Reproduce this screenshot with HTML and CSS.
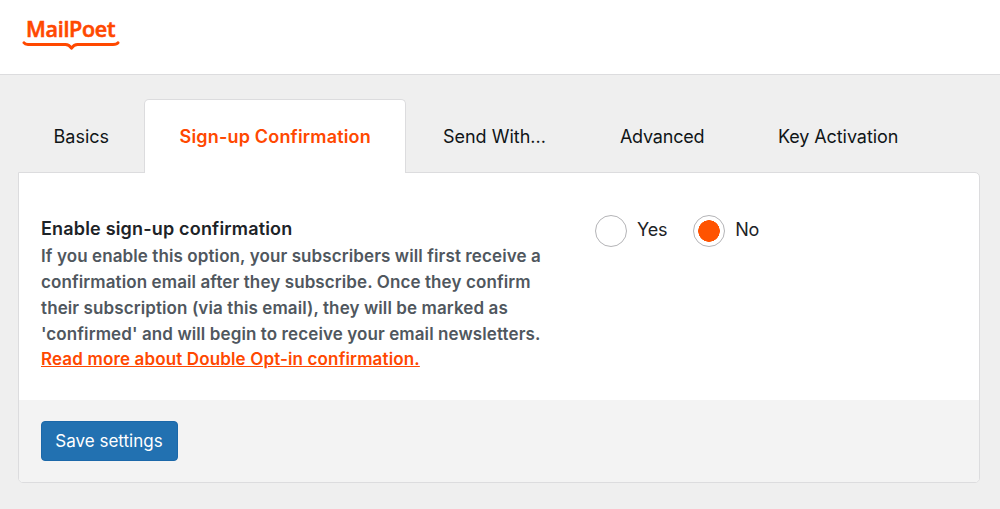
FILE: index.html
```html
<!DOCTYPE html>
<html lang="en">
	<head>
		<meta charset="utf-8">
		<title>MailPoet - Settings</title>
		<link rel="stylesheet" href="styles.css">
	</head>
	<body>
		<header class="top-bar">
			<a class="logo">
				<span class="logo-name">MailPoet</span>
				<svg class="logo-line" width="98" height="10" viewBox="0 0 98 10">
					<path d="M2 1.800Q3 3.500 6 3.500H43.500Q47 3.500 49.500 7.300Q52 3.500 55.500 3.500H91Q95 3.500 96 1.800" fill="none" stroke="#ff4800" stroke-width="2.900" stroke-linecap="round" stroke-linejoin="round"/>
				</svg>
			</a>
		</header>

		<main class="settings">
			<nav class="tabs">
				<a class="tab">Basics</a>
				<a class="tab active">Sign-up Confirmation</a>
				<a class="tab">Send With...</a>
				<a class="tab narrow">Advanced</a>
				<a class="tab">Key Activation</a>
			</nav>

			<form class="panel">
				<div class="row">
					<div class="description">
						<h4>Enable sign-up confirmation</h4>
						<p>
							If you enable this option, your subscribers will first receive a<br>
							confirmation email after they subscribe. Once they confirm<br>
							their subscription (via this email), they will be marked as<br>
							'confirmed' and will begin to receive your email newsletters.<br>
							<a class="more">Read more about Double Opt-in confirmation.</a>
						</p>
					</div>
					<div class="choices">
						<label class="choice">
							<input type="radio" name="confirmation">
							<span>Yes</span>
						</label>
						<label class="choice">
							<input type="radio" name="confirmation" checked>
							<span>No</span>
						</label>
					</div>
				</div>
				<div class="save">
					<button type="button" class="button">Save settings</button>
				</div>
			</form>
		</main>
	</body>
</html>
```

FILE: styles.css
```css
* {
	box-sizing: border-box;
}

body {
	margin: 0;
	height: 509px;
	overflow: hidden;
	background: #efefef;
	color: #1d2327;
	font-family: Inter, "Liberation Sans", sans-serif;
	font-size: 18px;
}

.top-bar {
	height: 75px;
	padding: 16px 0 0 22px;
	background: #fff;
	border-bottom: 1px solid #dcdcde;
}

.logo {
	display: block;
	width: 98px;
	color: #ff4800;
}

.logo-name {
	display: block;
	height: 25px;
	padding-left: 4px;
	font-family: "Open Sans", sans-serif;
	font-size: 21.5px;
	font-weight: 600;
	letter-spacing: -0.3px;
	line-height: 26px;
	-webkit-text-stroke: 0.6px #ff4800;
}

.logo-line {
	display: block;
}

.settings {
	padding: 24px 20px 0 18px;
}

.tabs {
	display: flex;
	height: 74px;
	margin-bottom: -1px;
	position: relative;
}

.tab {
	padding: 0 37px;
	color: #101517;
	line-height: 76px;
	white-space: nowrap;
}

.tab:first-child {
	padding: 0 34.5px 0 35.5px;
}

.tab.narrow {
	letter-spacing: -0.2px;
}

.tab:last-child {
	padding-left: 36.5px;
	letter-spacing: -0.08px;
}

.tab.active {
	padding: 0 34px 0 35px;
	background: #fff;
	border: 1px solid #dcdcde;
	border-bottom: 0;
	border-radius: 5px 5px 0 0;
	color: #ff4800;
	font-weight: 600;
	letter-spacing: 0.18px;
	line-height: 74px;
}

.panel {
	height: 311px;
	background: #fff;
	border: 1px solid #dcdcde;
	border-radius: 0 5px 5px 5px;
	overflow: hidden;
}

.row {
	display: flex;
	height: 227px;
	padding: 42px 22px 0;
}

.description {
	width: 554px;
	font-size: 17px;
	font-weight: 600;
}

.description h4 {
	margin: -1px 0 0;
	font-size: 18px;
	font-weight: 600;
	letter-spacing: 0.18px;
	line-height: 29px;
}

.description p {
	margin: 1.4px 0 0;
	color: #50575e;
	letter-spacing: 0.1px;
	line-height: 25.7px;
	white-space: nowrap;
}

.more {
	color: #ff4800;
	letter-spacing: 0.14px;
	text-decoration: underline;
}

.choices {
	display: flex;
	gap: 26px;
}

.choice {
	display: flex;
	gap: 10px;
	height: 32px;
	line-height: 29px;
	letter-spacing: -0.2px;
}

.choice input {
	appearance: none;
	width: 32px;
	height: 32px;
	margin: 0;
	border: 1px solid #b4b4b7;
	border-radius: 50%;
	background: #fff;
}

.choice input:checked {
	background: radial-gradient(circle, #ff5301 10.5px, #fff 11px);
}

.save {
	height: 82px;
	padding: 21px 22px 0;
	background: #f3f3f3;
}

.button {
	display: block;
	width: 137px;
	height: 40px;
	padding: 0 1px 0 0;
	border: 1px solid #1b68a9;
	border-radius: 4px;
	background: #2271b1;
	color: #fff;
	font: 400 17px/38px Inter, "Liberation Sans", sans-serif;
}
```
